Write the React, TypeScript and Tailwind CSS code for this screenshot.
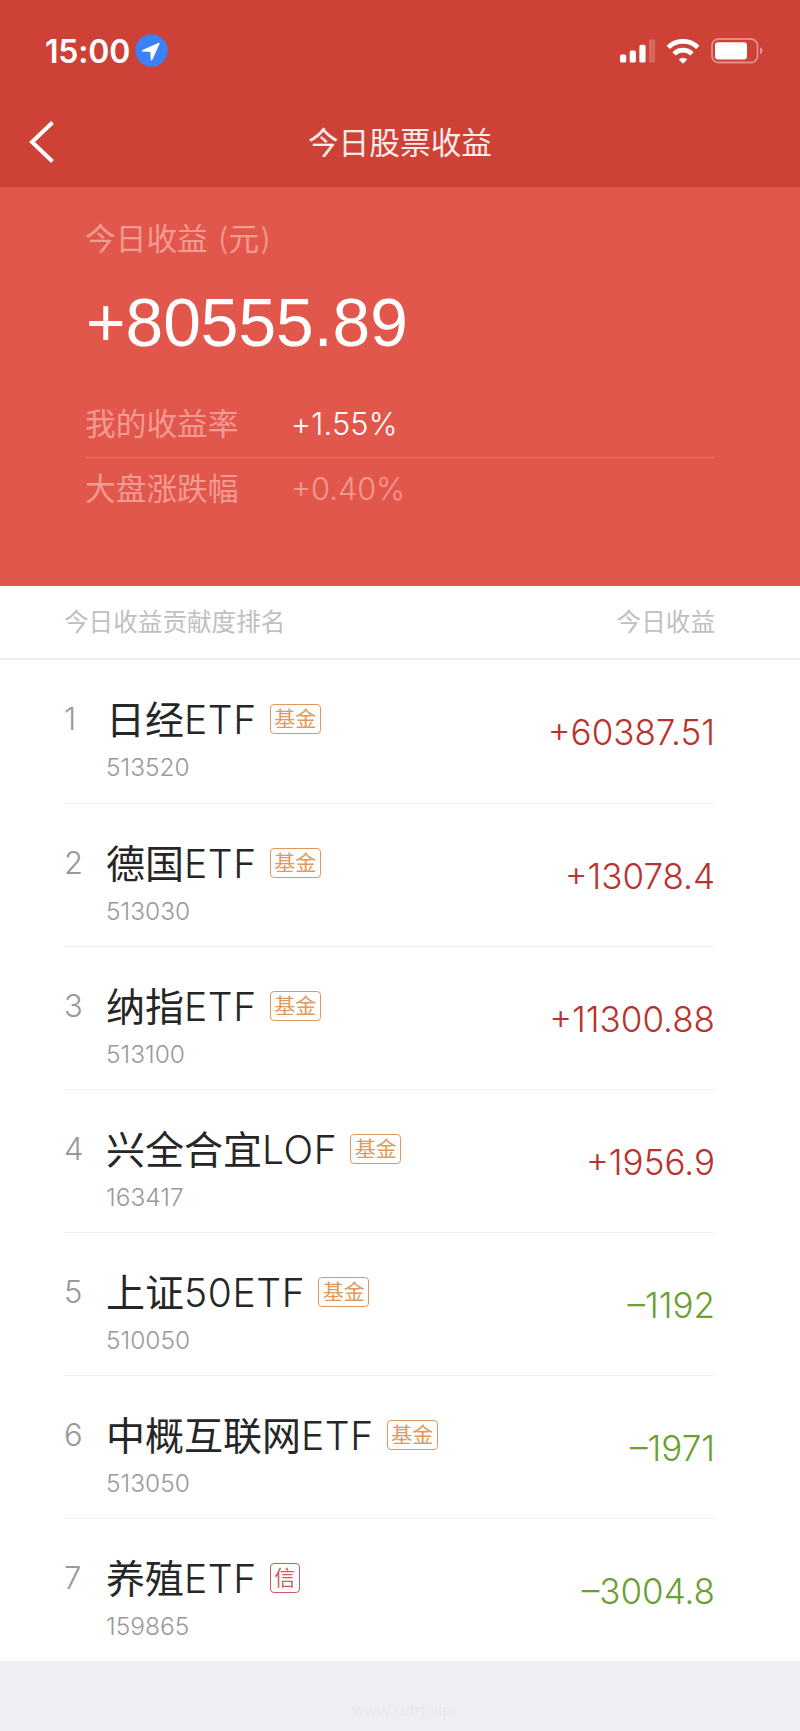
import clsx from "clsx";

type Holding = {
  rank: number;
  name: string;
  suffix: string;
  code: string;
  tag: "基金" | "信";
  profit: string;
};

const holdings: Holding[] = [
  { rank: 1, name: "日经", suffix: "ETF", code: "513520", tag: "基金", profit: "+60387.51" },
  { rank: 2, name: "德国", suffix: "ETF", code: "513030", tag: "基金", profit: "+13078.4" },
  { rank: 3, name: "纳指", suffix: "ETF", code: "513100", tag: "基金", profit: "+11300.88" },
  { rank: 4, name: "兴全合宜", suffix: "LOF", code: "163417", tag: "基金", profit: "+1956.9" },
  { rank: 5, name: "上证", suffix: "50ETF", code: "510050", tag: "基金", profit: "–1192" },
  { rank: 6, name: "中概互联网", suffix: "ETF", code: "513050", tag: "基金", profit: "–1971" },
  { rank: 7, name: "养殖", suffix: "ETF", code: "159865", tag: "信", profit: "–3004.8" }
];

function StatusBar() {
  return (
    <div className="flex h-[100px] items-center justify-between pl-[45px] pr-[37px] pt-[2px]">
      <div className="flex items-center">
        <span className="w-[90px] whitespace-nowrap pt-px text-[32px] font-[560] leading-none tracking-[-0.2px]">15:00</span>
        <svg className="-mt-px" width="33" height="33" viewBox="0 0 33 33" aria-hidden="true">
          <circle cx="16.5" cy="16.5" r="16.2" fill="#3b82f6" />
          <path d="M23.8 8.8 7 16.2q-.8 1 .3 1.3l8 .6.5 7.7q.6 1.1 1.4.2L24.7 9.6q0-.9-.9-.8Z" fill="#fff" />
        </svg>
      </div>
      <div className="flex items-center">
        <svg width="36" height="24" viewBox="0 0 36 24" fill="#fff" aria-hidden="true">
          <rect x="0" y="15.5" width="6.2" height="8" rx="1.6" />
          <rect x="9.7" y="11.5" width="6.2" height="12" rx="1.6" />
          <rect x="19.4" y="5.8" width="6.2" height="17.7" rx="1.6" />
          <rect x="29" y="0.3" width="6.2" height="23.2" rx="1.6" opacity="0.2" />
        </svg>
        <svg className="ml-[10px]" width="34" height="25" viewBox="0 0 34 25" fill="none" stroke="#fff" strokeWidth="4.8" aria-hidden="true">
          <path d="M2.2 8.4a21.2 21.2 0 0 1 29.6 0" />
          <path d="M8 14.9a12.8 12.8 0 0 1 18 0" />
          <path d="M17 24.7l-4.3-4.3a6.2 6.2 0 0 1 8.6 0Z" fill="#fff" stroke="none" />
        </svg>
        <svg className="ml-[11px]" width="52" height="26" viewBox="0 0 52 26" aria-hidden="true">
          <rect x="1" y="1" width="45.5" height="23.5" rx="6.5" fill="none" stroke="#fff" strokeWidth="1.8" opacity="0.4" />
          <rect x="4" y="4.2" width="32" height="17.2" rx="3.2" fill="#fff" />
          <path d="M49 9.2q2.6 1 2.6 3.6T49 16.4Z" fill="#fff" opacity="0.45" />
        </svg>
      </div>
    </div>
  );
}

function NavBar() {
  return (
    <div className="grid h-[87px] grid-cols-[100px_1fr_100px] items-center pb-[4px]">
      <button type="button" aria-label="返回" className="pl-[29px]">
        <svg width="26" height="42" viewBox="0 0 26 42" fill="none" stroke="#fff" strokeWidth="4" aria-hidden="true">
          <path d="M23.5 1.5 3 21l20.5 19.5" />
        </svg>
      </button>
      <h1 className="pt-[3px] text-center text-[30.7px] leading-none text-white/90">今日股票收益</h1>
    </div>
  );
}

function Summary() {
  return (
    <section className="h-[399px] bg-[#e2574c] pl-[85px] pr-[85px] pt-[32px] text-white">
      <p className="h-[40px] text-[30.7px] leading-[40px] text-[#f29b93]">
        今日收益<span className="ml-[10px] font-light">(</span>元<span className="ml-[1px] font-light">)</span>
      </p>
      <p className="ml-px mt-[24px] h-[80px] font-['Liberation_Sans',sans-serif] text-[67.7px] leading-[80px]">+80555.89</p>
      <div className="mt-[22px] flex h-[73px] items-center border-b border-[#ea6c62] pt-[6px] text-[30.7px]">
        <span className="w-[206px] text-[#f29b93]">我的收益率</span>
        <span className="font-[350] tracking-[0.2px]">+1.55%</span>
      </div>
      <div className="flex h-[62px] items-center text-[30.7px] text-[#f29b93]">
        <span className="w-[206px]">大盘涨跌幅</span>
        <span className="font-[350]">+0.40%</span>
      </div>
    </section>
  );
}

function HoldingRow({ item }: { item: Holding }) {
  return (
    <li className="ml-[64px] mr-[85px] flex h-[143px] border-b border-[#f0f0f0] first:h-[144px] last:h-[142px] last:border-b-0">
      <span className="w-[42px] pt-[39px] text-[31px] font-[350] leading-[40px] text-[#999]">{item.rank}</span>
      <div className="flex-1 pt-[33px]">
        <div className="flex h-[50px] items-center">
          <span className="whitespace-nowrap pt-[3px] text-[39px] leading-[50px] text-[#262626]">
            {item.name}
            <span className="font-light tracking-[0.6px]">{item.suffix}</span>
          </span>
          <span
            className={clsx(
              "ml-[13px] mt-px flex h-[30px] items-center rounded-[4px] border px-[3.5px] text-[21px] leading-none",
              item.tag === "信" ? "border-[#cf5a5e] text-[#cf5a5e]" : "border-[#e0995c] text-[#e0995c]"
            )}
          >
            {item.tag}
          </span>
        </div>
        <p className="pt-px text-[24.5px] font-[350] leading-[46px] text-[#999]">{item.code}</p>
      </div>
      <span
        className={clsx(
          "pt-[47px] text-[35px] font-[350] leading-[50px]",
          item.profit.startsWith("+") ? "text-[#b8332e]" : "text-[#6b9f33]"
        )}
      >
        {item.profit}
      </span>
    </li>
  );
}

export default function App() {
  return (
    <main className="flex h-[1731px] w-[800px] flex-col bg-[#efeef3] font-[Inter,'Noto_Sans_CJK_SC',sans-serif]">
      <header className="bg-[#cd4137] text-white">
        <StatusBar />
        <NavBar />
      </header>
      <Summary />
      <div className="flex h-[74px] items-center justify-between border-b-2 border-[#ececec] bg-white pl-[64px] pr-[85px] pt-px text-[24.6px] text-[#c0c0c0]">
        <span>今日收益贡献度排名</span>
        <span>今日收益</span>
      </div>
      <ul className="bg-white">
        {holdings.map((item) => (
          <HoldingRow key={item.rank} item={item} />
        ))}
      </ul>
      <footer className="flex flex-1 items-end justify-center pb-[8px] pl-[4px] font-['Open_Sans',sans-serif] text-[16.5px] leading-[26px] text-[#e9e9ec]">
        www.ddrj.vip
      </footer>
    </main>
  );
}
